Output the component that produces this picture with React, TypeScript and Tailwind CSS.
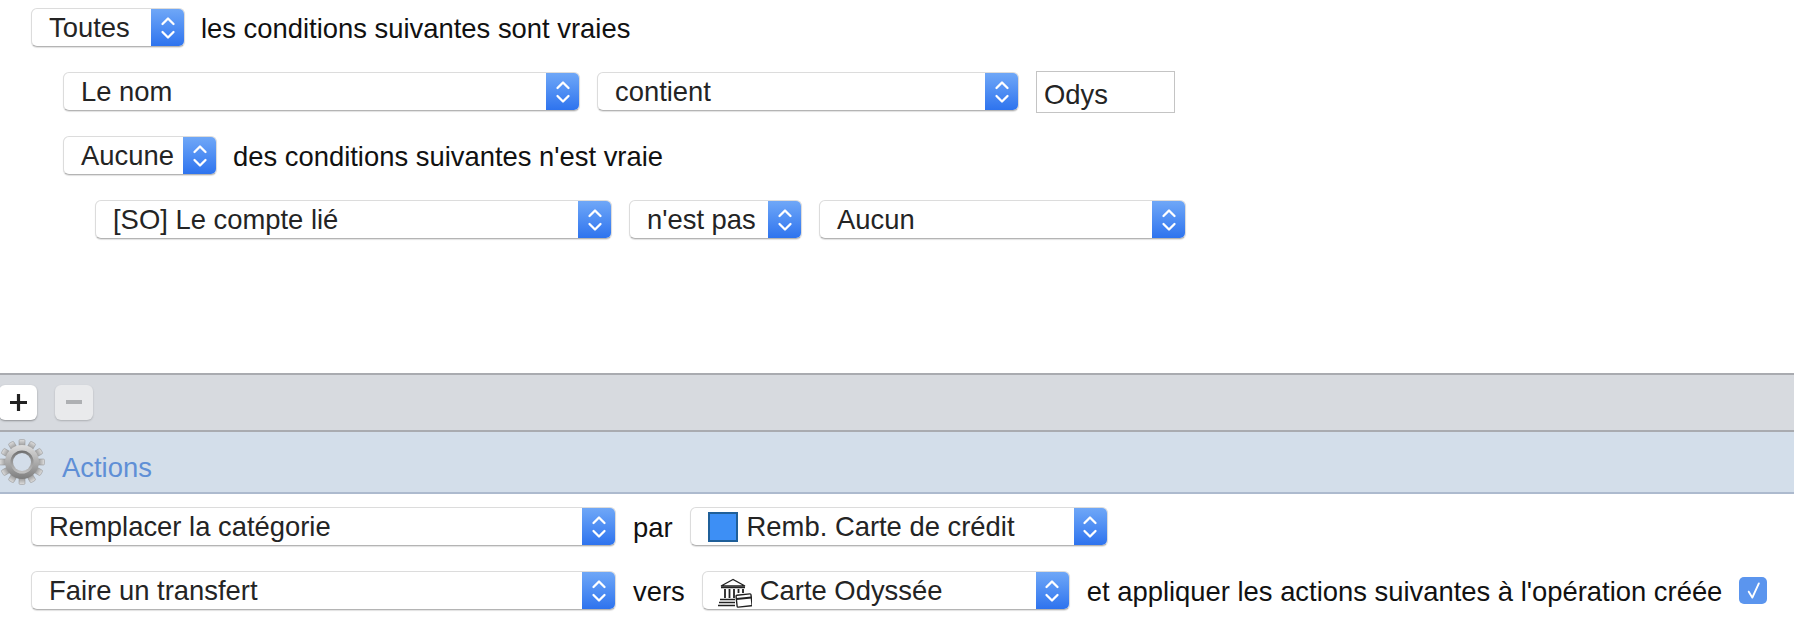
const font = "font-['Liberation_Sans',Arial,sans-serif]";

function Chevrons() {
  return (
    <svg viewBox="0 0 18 28" className="w-[18px] h-[28px]" fill="none" stroke="white" strokeWidth="2.3" strokeLinecap="round" strokeLinejoin="round">
      <path d="M3.500 10 L9 4.500 L14.500 10" />
      <path d="M3.500 18 L9 23.500 L14.500 18" />
    </svg>
  );
}

function Select({ w, label, icon }: { w: string; label: string; icon?: React.ReactNode }) {
  return (
    <div className={`${w} h-[39px] flex-none flex items-stretch rounded-[6px] bg-white border border-[#dcdcdc] border-b-[#b4b4b4] shadow-[0_1px_1px_rgba(0,0,0,0.12)] overflow-hidden`}>
      <div className="flex-1 min-w-0 flex items-center pl-[17px] pt-[1px] text-[#242424] whitespace-nowrap">
        {icon}
        {label}
      </div>
      <div className="w-[33px] flex-none flex items-center justify-center bg-gradient-to-b from-[#6fa7f7] to-[#2e73ee]">
        <Chevrons />
      </div>
    </div>
  );
}

function Gear() {
  const teeth = Array.from({ length: 12 }, (_, i) => i * 30);
  return (
    <svg viewBox="0 0 48 48" className="w-[48px] h-[48px] flex-none ml-[-2px]">
      <defs>
        <linearGradient id="g" x1="0" y1="0" x2="0" y2="1">
          <stop offset="0" stopColor="#dedede" />
          <stop offset="1" stopColor="#7d7d7d" />
        </linearGradient>
        <linearGradient id="h" x1="0" y1="0" x2="0" y2="1">
          <stop offset="0" stopColor="#6e6e6e" />
          <stop offset="1" stopColor="#c4c4c4" />
        </linearGradient>
      </defs>
      {teeth.map((a) => (
        <rect key={a} x="21" y="1.500" width="6" height="9" rx="1.200" fill="url(#g)" stroke="#8e8e8e" strokeWidth="0.500" transform={`rotate(${a} 24 24)`} />
      ))}
      <circle cx="24" cy="24" r="17" fill="url(#g)" />
      <circle cx="24" cy="24" r="11.500" fill="url(#h)" />
      <circle cx="24" cy="24" r="9" fill="#d3dde9" />
    </svg>
  );
}

function Bank() {
  return (
    <svg viewBox="0 0 34 30" className="w-[34px] h-[30px] flex-none ml-[-2px] mr-[8px] mt-[3px]" fill="none" stroke="#222" strokeWidth="1.400">
      <path d="M15 1.500 L3 8 H27 Z" fill="white" />
      <path d="M3 9.500 H27" strokeWidth="1.600" />
      <path d="M7 11 V20 M11.500 11 V20 M16 11 V20 M20.500 11 V15 M25 11 V15" strokeWidth="1.800" />
      <path d="M2 21.500 H17 M1 24.500 H17 M0 27.500 H17" strokeWidth="1.600" />
      <rect x="18.500" y="16.500" width="15" height="12" rx="1" fill="white" transform="rotate(-6 26 22)" />
      <path d="M18.500 21 L33.500 19.500" strokeWidth="2.200" />
    </svg>
  );
}

export default function App() {
  return (
    <div className={`${font} w-[1794px] h-[628px] bg-white text-[27.4px] leading-none text-[#111] overflow-hidden flex flex-col`}>
      <div className="h-[373px] flex-none flex flex-col gap-[25px] pt-[8px]">
        <div className="flex items-center pl-[31px] gap-[16px]">
          <Select w="w-[154px]" label="Toutes" />
          <span className="pt-[3px]">les conditions suivantes sont vraies</span>
        </div>
        <div className="flex items-start pl-[63px] gap-[17px]">
          <Select w="w-[517px]" label="Le nom" />
          <Select w="w-[422px]" label="contient" />
          <div className="w-[139px] h-[42px] flex-none border border-[#c4c4c4] flex items-center pl-[7px] text-[#242424] pt-[5px] mt-[-1px] mb-[-2px]">Odys</div>
        </div>
        <div className="flex items-center pl-[63px] gap-[16px]">
          <Select w="w-[154px]" label="Aucune" />
          <span className="pt-[3px]">des conditions suivantes n'est vraie</span>
        </div>
        <div className="flex items-center pl-[95px] gap-[17px]">
          <Select w="w-[517px]" label="[SO] Le compte lié" />
          <Select w="w-[173px]" label="n'est pas" />
          <Select w="w-[367px]" label="Aucun" />
        </div>
      </div>

      <div className="h-[59px] flex-none bg-[#d7dadf] border-t-[2px] border-b-[2px] border-[#a9abb0] flex items-center gap-[18px] pb-[1px]">
        <div className="w-[38px] h-[35px] flex items-center justify-center rounded-[6px] bg-white shadow-[0_1px_2px_rgba(0,0,0,0.35)] ml-[-1px]">
          <svg viewBox="0 0 16 16" className="w-[17px] h-[17px]"><path d="M6.500 0h3v6.500H16v3H9.500V16h-3V9.500H0v-3h6.500z" fill="#222" /></svg>
        </div>
        <div className="w-[38px] h-[35px] flex items-center justify-center rounded-[6px] bg-[#e9eaec] shadow-[0_1px_2px_rgba(0,0,0,0.2)]">
          <svg viewBox="0 0 16 4" className="w-[16px] h-[4px]"><rect width="16" height="4" fill="#aeb0b3" /></svg>
        </div>
      </div>

      <div className="h-[62px] flex-none bg-[#d3deea] border-b-[2px] border-[#adbace] flex items-center gap-[16px]">
        <Gear />
        <span className="text-[#5f8fd6] pt-[11px]">Actions</span>
      </div>

      <div className="flex flex-col gap-[25px] pt-[13px]">
        <div className="flex items-center pl-[31px] gap-[17px]">
          <Select w="w-[585px]" label="Remplacer la catégorie" />
          <span className="pt-[3px]">par</span>
          <Select
            w="w-[418px]"
            label="Remb. Carte de crédit"
            icon={<span className="w-[30px] h-[30px] flex-none bg-[#3d8ff5] border-[2px] border-[#1f5f99] mr-[9px] mb-[1px]" />}
          />
        </div>
        <div className="flex items-center pl-[31px] gap-[17px]">
          <Select w="w-[585px]" label="Faire un transfert" />
          <span className="pt-[3px]">vers</span>
          <Select w="w-[368px]" label="Carte Odyssée" icon={<Bank />} />
          <span className="pt-[3px]">et appliquer les actions suivantes à l'opération créée</span>
          <div className="w-[28px] h-[27px] flex-none rounded-[5px] bg-[#5b95ee] flex items-center justify-center">
            <svg viewBox="0 0 16 16" className="w-[19px] h-[19px]" fill="none" stroke="white" strokeWidth="1.600" strokeLinecap="round" strokeLinejoin="round"><path d="M4 9 L7 14 L12.500 2" /></svg>
          </div>
        </div>
      </div>
    </div>
  );
}
